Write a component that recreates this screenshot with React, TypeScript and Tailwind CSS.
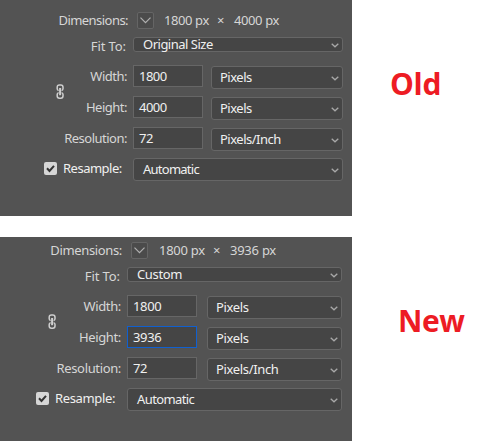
type PanelProps = {
  shifted?: boolean;
  height: string;
  fit: string;
};

function Chevron() {
  return (
    <svg className="mt-px shrink-0" width="8" height="5" viewBox="0 0 8 5" fill="none">
      <path d="M0.7 0.7L4 3.8L7.3 0.7" stroke="#a8a8a8" strokeWidth="1.3" />
    </svg>
  );
}

function Select({ text, className }: { text: string; className: string }) {
  return (
    <div className={`flex items-center justify-between rounded-[3px] border border-[#666] bg-[#454545] pr-[3px] text-[#f0f0f0] ${className}`}>
      <span>{text}</span>
      <Chevron />
    </div>
  );
}

function Field({ value, focused }: { value: string; focused?: boolean }) {
  return (
    <div className={`h-[22px] w-[70px] shrink-0 border bg-[#454545] pl-[5px] leading-[20px] text-[#f0f0f0] ${focused ? "border-[#1060d0]" : "border-[#666]"}`}>
      {value}
    </div>
  );
}

function LinkIcon() {
  return (
    <svg width="9" height="16" viewBox="0 0 9 16" fill="none" stroke="#cfcfcf" strokeWidth="1.5">
      <path d="M2.6 6.6Q1.2 6.2 1.2 4.8V3.2Q1.2 1 3.4 1H4.8Q7 1 7 3.2V4.8Q7 6.2 5.6 6.6" />
      <path d="M2.6 8.6Q1.2 9 1.2 10.4V12Q1.2 14.2 3.4 14.2H4.8Q7 14.2 7 12V10.4Q7 9 5.6 8.6" />
      <path d="M4.1 4V11.2" strokeWidth="2" />
    </svg>
  );
}

function Row({ label, value, unit, shifted, focused }: { label: string; value: string; unit: string; shifted?: boolean; focused?: boolean }) {
  return (
    <div className="flex h-[24px]">
      <div className="flex-1 pr-[6px] text-right leading-[22px]">{label}</div>
      <Field value={value} focused={focused} />
      <Select text={unit} className={`mt-px h-[23px] pl-[8px] ${shifted ? "ml-[10px] w-[135px]" : "ml-[8px] w-[132px]"}`} />
    </div>
  );
}

function Panel({ shifted, height, fit }: PanelProps) {
  const wide = shifted ? "w-[215px]" : "w-[210px]";
  return (
    <section className={`w-[352px] overflow-hidden bg-[#535353] text-[13px] whitespace-nowrap text-[#d6d6d6] ${shifted ? "h-[204px] pt-[5px] pr-[10px] tracking-[-0.35px]" : "h-[216px] pt-[12px] pr-[9px] tracking-[-0.5px]"}`}>
      <div className="flex h-[17px] items-center">
        <div className={`text-right ${shifted ? "w-[122px]" : "w-[128px] tracking-[-0.55px]"}`}>Dimensions:</div>
        <div className="ml-[9px] flex size-[17px] shrink-0 items-center justify-center rounded-[2px] border border-[#656565] bg-[#4b4b4b]">
          <svg width="11" height="7" viewBox="0 0 11 7" fill="none">
            <path d="M0.5 0.7L5.5 5.7L10.5 0.7" stroke="#b0b0b0" strokeWidth="1.2" />
          </svg>
        </div>
        <div className={`flex ${shifted ? "ml-[11px] tracking-[-0.25px]" : "ml-[10px] tracking-[-0.4px]"}`}>
          <span className={shifted ? "w-[54px]" : "w-[53px]"}>1800 px</span>
          <span className="w-[17px]">×</span>
          <span>{height} px</span>
        </div>
      </div>
      <div className="mt-[8px] flex h-[15px]">
        <div className="flex-1 pr-[7px] text-right leading-[18px] tracking-[-0.1px]">Fit To:</div>
        <Select text={fit} className={`h-[15px] pl-[9px] leading-[13px] ${wide}`} />
      </div>
      <div className={`mt-[13px] flex ${shifted ? "pl-[48px]" : "pl-[56px]"}`}>
        <div className="w-[9px] shrink-0 pt-[19px]">
          <LinkIcon />
        </div>
        <div className="flex flex-1 flex-col gap-[7px]">
          <Row label="Width:" value="1800" unit="Pixels" shifted={shifted} />
          <Row label="Height:" value={height} unit="Pixels" shifted={shifted} focused={shifted} />
        </div>
      </div>
      <div className="mt-[7px]">
        <Row label="Resolution:" value="72" unit="Pixels/Inch" shifted={shifted} />
      </div>
      <div className="mt-[7px] flex h-[23px] text-[#f0f0f0]">
        <div className={`flex flex-1 ${shifted ? "pl-[36px]" : "pl-[44px]"}`}>
          <div className="mt-[4px] size-[13px] rounded-[2px] bg-[#d6d6d6]">
            <svg width="13" height="13" viewBox="0 0 13 13" fill="none">
              <path d="M3 6.3L5.5 9L10 3.8" stroke="#333" strokeWidth="2" />
            </svg>
          </div>
          <div className="ml-[6px] leading-[20px]">Resample:</div>
        </div>
        <Select text="Automatic" className={`h-[23px] pl-[9px] ${shifted ? "tracking-[-0.6px]" : "tracking-[-0.75px]"} ${wide}`} />
      </div>
    </section>
  );
}

export default function App() {
  return (
    <main className="flex h-[441px] w-[487px] flex-col gap-[21px] overflow-hidden bg-white font-['Noto_Sans',sans-serif]">
      <div className="flex">
        <Panel height="4000" fit="Original Size" />
        <h2 className="pt-[63px] pl-[38px] font-['Open_Sans',sans-serif] text-[30px] leading-[42px] font-bold tracking-[-0.3px] text-[#ed1c24]">Old</h2>
      </div>
      <div className="flex">
        <Panel shifted height="3936" fit="Custom" />
        <h2 className="pt-[63px] pl-[46px] font-['Open_Sans',sans-serif] text-[30px] leading-[42px] font-bold tracking-[-0.4px] text-[#ed1c24]">New</h2>
      </div>
    </main>
  );
}
